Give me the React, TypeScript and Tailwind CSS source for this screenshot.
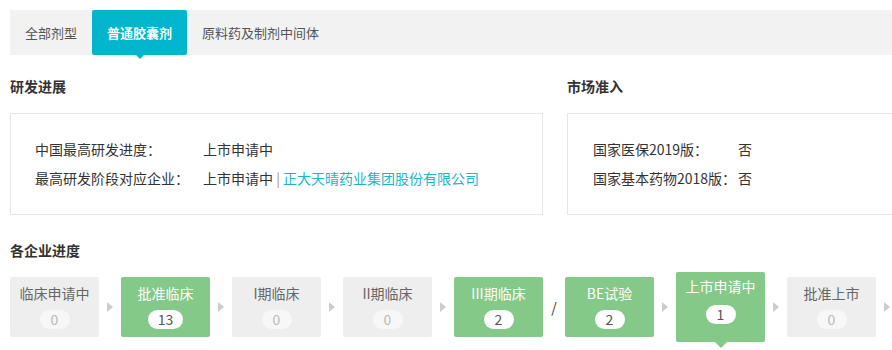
const font = { fontFamily: '"Noto Sans CJK SC", "Noto Sans", sans-serif' };

const tabs = [
  { label: "全部剂型" },
  { label: "普通胶囊剂", active: true },
  { label: "原料药及制剂中间体" },
];

type Step = { name: string; count: number; done?: boolean; current?: boolean; sep?: "arrow" | "slash" };

const steps: Step[] = [
  { name: "临床申请中", count: 0, sep: "arrow" },
  { name: "批准临床", count: 13, done: true, sep: "arrow" },
  { name: "I期临床", count: 0, sep: "arrow" },
  { name: "II期临床", count: 0, sep: "arrow" },
  { name: "III期临床", count: 2, done: true, sep: "slash" },
  { name: "BE试验", count: 2, done: true, sep: "arrow" },
  { name: "上市申请中", count: 1, done: true, current: true, sep: "arrow" },
  { name: "批准上市", count: 0, sep: "arrow" },
];

function Arrow() {
  return (
    <div className="w-[22px] shrink-0 flex justify-center">
      <div className="w-0 h-0 border-y-[5px] border-y-transparent border-l-[6px] border-l-[#cccccc]" />
    </div>
  );
}

function StepBox({ step }: { step: Step }) {
  if (step.current) {
    return (
      <div className="relative w-[89px] h-[70px] shrink-0 rounded-[2px] bg-[#84c987] flex flex-col items-center pt-[4px]">
        <div className="text-[14px] leading-[20px] text-white">{step.name}</div>
        <div className="mt-[9px] h-[19px] min-w-[30px] px-[10px] rounded-full bg-white text-[14px] leading-[19px] text-[#555] text-center">
          {step.count}
        </div>
        <div className="absolute left-1/2 -translate-x-1/2 top-full w-0 h-0 border-x-[6px] border-x-transparent border-t-[6px] border-t-[#84c987]" />
      </div>
    );
  }
  return (
    <div
      className={
        step.done
          ? "w-[89px] h-[60px] shrink-0 rounded-[2px] bg-[#84c987] flex flex-col items-center pt-[6px]"
          : "w-[89px] h-[60px] shrink-0 rounded-[2px] bg-[#eeeeee] flex flex-col items-center pt-[6px]"
      }
    >
      <div className={step.done ? "text-[14px] leading-[20px] text-white" : "text-[14px] leading-[20px] text-[#666]"}>
        {step.name}
      </div>
      <div
        className={
          step.done
            ? "mt-[7px] h-[19px] min-w-[30px] px-[10px] rounded-full bg-white text-[14px] leading-[19px] text-[#555] text-center"
            : "mt-[7px] h-[19px] min-w-[30px] px-[10px] rounded-full bg-[#f7f7f7] text-[14px] leading-[19px] text-[#bbbbbb] text-center"
        }
      >
        {step.count}
      </div>
    </div>
  );
}

export default function App() {
  return (
    <div className="w-[892px] h-[350px] overflow-hidden bg-white pl-[10px] pt-[10px] text-[#333]" style={font}>
      {/* tabs */}
      <div className="flex h-[45px] bg-[#f2f2f2] text-[13px]">
        {tabs.map((t) =>
          t.active ? (
            <div key={t.label} className="relative px-[15px] leading-[45px] bg-[#00b5cc] text-white font-bold rounded-[2px]">
              {t.label}
              <div className="absolute left-1/2 -translate-x-1/2 top-full w-0 h-0 border-x-[4px] border-x-transparent border-t-[4px] border-t-[#00b5cc]" />
            </div>
          ) : (
            <div key={t.label} className="px-[15px] leading-[45px] text-[#555]">
              {t.label}
            </div>
          )
        )}
      </div>

      <div className="flex gap-[24px] mt-[21px]">
        <section className="w-[533px] shrink-0">
          <h2 className="text-[14px] leading-[20px] font-bold">研发进展</h2>
          <div className="mt-[17px] border border-[#e6e6e6] h-[102px] pt-[25px] pl-[24px] text-[14px] leading-[20px] flex flex-col gap-[9px]">
            <div className="flex">
              <span className="w-[168px]">中国最高研发进度：</span>
              <span>上市申请中</span>
            </div>
            <div className="flex">
              <span className="w-[168px]">最高研发阶段对应企业：</span>
              <span>
                上市申请中 <span className="text-[#b08a5a]">|</span>{" "}
                <span className="text-[#1fb3cc]">正大天晴药业集团股份有限公司</span>
              </span>
            </div>
          </div>
        </section>
        <section className="w-[533px] shrink-0">
          <h2 className="text-[14px] leading-[20px] font-bold">市场准入</h2>
          <div className="mt-[17px] border border-[#e6e6e6] h-[102px] pt-[25px] pl-[25px] text-[14px] leading-[20px] flex flex-col gap-[9px]">
            <div className="flex">
              <span className="w-[145px]">国家医保2019版：</span>
              <span>否</span>
            </div>
            <div className="flex">
              <span className="w-[145px]">国家基本药物2018版：</span>
              <span>否</span>
            </div>
          </div>
        </section>
      </div>

      <h2 className="mt-[25px] text-[14px] leading-[20px] font-bold">各企业进度</h2>
      <div className="mt-[12px] flex items-center h-[70px]">
        {steps.map((s) => (
          <div key={s.name} className="flex items-center">
            <StepBox step={s} />
            {s.sep === "slash" ? (
              <div className="w-[22px] shrink-0 text-center text-[14px] text-[#333]">/</div>
            ) : (
              <Arrow />
            )}
          </div>
        ))}
      </div>
    </div>
  );
}
